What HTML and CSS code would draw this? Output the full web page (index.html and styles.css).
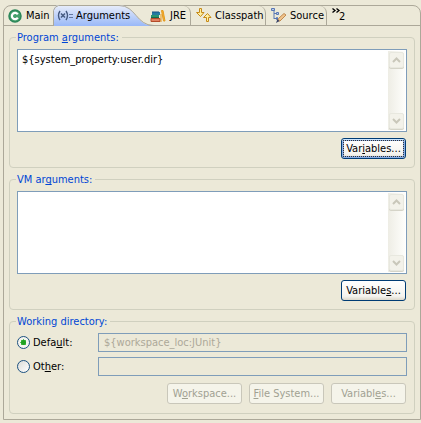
FILE: index.html
```html
<!DOCTYPE html>
<html lang="en">
<head>
<meta charset="utf-8">
<title>Arguments</title>
<link rel="stylesheet" href="styles.css">
</head>
<body>
<main class="panel">
  <nav class="tabs" role="tablist">
    <button class="tab tab-main" role="tab" type="button">
      <svg width="14" height="14" viewBox="0 0 14 14"><circle cx="7" cy="7" r="6" fill="#45a06c" stroke="#2a8659" stroke-width="1.500"/><path d="M9.800 5.300A3.200 3.200 0 1 0 9.800 8.700" fill="none" stroke="#fff" stroke-width="2.200"/></svg>
      <span>Main</span>
    </button>
    <button class="tab tab-selected" role="tab" type="button" aria-selected="true">
      <svg class="tab-shape" width="101" height="21" viewBox="0 0 101 21">
        <defs><linearGradient id="blue" x1="0" y1="0" x2="0" y2="1"><stop offset="0" stop-color="#e9eefa"/><stop offset="1" stop-color="#99b8f8"/></linearGradient></defs>
        <path d="M0 21V5Q1 1 5 0H66C83 0 83 21 101 21Z" fill="url(#blue)"/>
        <path d="M.5 21V5.500Q1.500 1.500 5.500.5H66C83 .5 83 20.500 101 20.500" fill="none" stroke="#aca899"/>
      </svg>
      <svg width="17" height="12" viewBox="0 0 17 12" fill="none" stroke="#465a80"><path d="M3 1Q0 5.500 3 10M9 1Q12 5.500 9 10" stroke-width="1.400"/><path d="M4 3.500l4 4M8 3.500l-4 4" stroke-width="1.500"/><path d="M12 4.500h4M12 7.500h4" stroke="#64779e"/></svg>
      <span>Arguments</span>
    </button>
    <button class="tab tab-jre" role="tab" type="button">
      <svg width="16" height="14" viewBox="0 0 16 14"><path d="M2 3h8v3H2z" fill="#267aa0"/><path d="M2 3h7" stroke="#174f86"/><path d="M1 6h8v3H1z" fill="#2c9470"/><path d="M1 8.500h8" stroke="#14694e"/><path d="M1 9.500h9v3H1z" fill="#e08060" stroke="#b34b28"/><path d="M11.500 1.500h1.500l2 10.500h-1.500zM11 5v8" fill="#f7b233" stroke="#e59a1c"/></svg>
      <span>JRE</span>
    </button>
    <button class="tab tab-classpath" role="tab" type="button">
      <svg width="16" height="15" viewBox="0 0 16 15" fill="#fff0a0" stroke="#c68a18"><path d="M3.500.5h2v4h2.500l-3.500 4-4-4h3zM10.500 13.500h2v-4h2.500l-3.500-4-4 4h3z"/></svg>
      <span>Classpath</span>
    </button>
    <button class="tab tab-source" role="tab" type="button">
      <svg width="16" height="16" viewBox="0 0 16 16"><path d="M1 1.500h3M3 2v9M3 5.500h3M3 10.500h3" fill="none" stroke="#5877b4"/><path d="M.5.5h3v2h-3zM5.500 4.500h2v2h-2zM5.500 9.500h1v2h-1z" fill="#bacbea" stroke="#5877b4"/><path d="M6.500 13l1-2.500 5.500-5 2 1.500-6 6z" fill="#f0c48c" stroke="#c08a50"/><path d="M5 15l1.500-4 2 2z" fill="#354269"/></svg>
      <span>Source</span>
    </button>
    <button class="more" type="button" aria-label="Show 2 more tabs">
      <svg width="9" height="5" viewBox="0 0 9 5"><path d="M.5.5l2.500 2-2.500 2M4.500.5l2.500 2-2.500 2" fill="none" stroke="#000" stroke-width="1.300"/></svg>
      <span>2</span>
    </button>
  </nav>
  <form class="content">
    <fieldset class="group">
      <legend><label for="program">Program <u>a</u>rguments:</label></legend>
      <div class="editor">
        <textarea id="program" spellcheck="false">${system_property:user.dir}</textarea>
        <div class="scrollbar">
          <button class="arrow" type="button" disabled aria-label="Scroll up"><svg width="9" height="6" viewBox="0 0 9 6"><path d="M1 5l3.500-3.500L8 5"/></svg></button>
          <button class="arrow" type="button" disabled aria-label="Scroll down"><svg width="9" height="6" viewBox="0 0 9 6"><path d="M1 1l3.500 3.500L8 1"/></svg></button>
        </div>
      </div>
      <div class="actions"><button class="btn btn-focus" type="button">Var<u>i</u>ables...</button></div>
    </fieldset>
    <fieldset class="group">
      <legend><label for="vm">VM ar<u>g</u>uments:</label></legend>
      <div class="editor">
        <textarea id="vm" spellcheck="false"></textarea>
        <div class="scrollbar">
          <button class="arrow" type="button" disabled aria-label="Scroll up"><svg width="9" height="6" viewBox="0 0 9 6"><path d="M1 5l3.500-3.500L8 5"/></svg></button>
          <button class="arrow" type="button" disabled aria-label="Scroll down"><svg width="9" height="6" viewBox="0 0 9 6"><path d="M1 1l3.500 3.500L8 1"/></svg></button>
        </div>
      </div>
      <div class="actions"><button class="btn" type="button">Variable<u>s</u>...</button></div>
    </fieldset>
    <fieldset class="group">
      <legend>Working directory:</legend>
      <div class="choices">
        <label class="choice"><input type="radio" name="dir" checked><span>Defa<u>u</u>lt:</span></label>
        <input class="path" type="text" value="${workspace_loc:JUnit}" aria-label="Default directory" disabled>
        <label class="choice"><input type="radio" name="dir"><span>Ot<u>h</u>er:</span></label>
        <input class="path" type="text" aria-label="Other directory" disabled>
      </div>
      <div class="actions">
        <button class="btn" type="button" disabled>W<u>o</u>rkspace...</button>
        <button class="btn" type="button" disabled><u>F</u>ile System...</button>
        <button class="btn" type="button" disabled>Variabl<u>e</u>s...</button>
      </div>
    </fieldset>
  </form>
</main>
</body>
</html>
```
FILE: styles.css
```css
* { box-sizing: border-box; }
body {
  margin: 0;
  padding: 5px 0 3px 3px;
  background: #ece9d8;
  color: #000;
  font: 11px/13px Tahoma, "DejaVu Sans Condensed", "Liberation Sans", sans-serif;
}
button, input, textarea { font: inherit; color: inherit; margin: 0; }
button { background: none; border: 0; padding: 0; white-space: nowrap; }
svg { display: block; flex: none; }
u { text-underline-offset: 1px; text-decoration-thickness: 1px; text-decoration-skip-ink: none; }

.panel { border: 1px solid #aca899; border-radius: 8px 8px 0 0; }
.tabs { display: flex; height: 20px; border-bottom: 1px solid #aca899; }
.tab {
  display: flex;
  align-items: center;
  gap: 4px;
  position: relative;
  padding-left: 5px;
  border-right: 1px solid #aca899;
  border-radius: 0 7px 0 0;
}
.tab > span { position: relative; }
.tab > svg { position: relative; }
.tab-main { width: 49px; padding-left: 4px; border: 0; }
.tab-selected { width: 96px; padding-left: 4px; gap: 2px; border: 0; }
.tab > .tab-shape { position: absolute; left: 0; top: -1px; }
.tab-jre { width: 42px; padding-left: 1px; }
.tab-classpath { width: 75px; gap: 3px; }
.tab-source { width: 61px; gap: 3px; }
.more { display: flex; align-items: flex-start; padding: 2px 0 0 5px; }
.more span { padding-top: 2px; margin-left: -2px; }

.content { display: grid; gap: 5px; padding: 5px; }
.group {
  min-width: 0;
  margin: 0;
  padding: 5px 7px 8px;
  border: 1px solid #d0d0bf;
  border-radius: 4px;
}
legend { padding: 0 3px 0 1px; margin-left: -1px; color: #0046d5; }
.editor {
  display: flex;
  height: 83px;
  padding: 1px;
  border: 1px solid #7f9db9;
  background: #fff;
}
.editor textarea {
  flex: 1;
  min-width: 0;
  padding: 2px 3px;
  border: 0;
  outline: 0;
  resize: none;
  overflow: hidden;
  background: #fff;
}
.scrollbar {
  display: flex;
  flex-direction: column;
  justify-content: space-between;
  width: 17px;
  padding: 1px;
  background: linear-gradient(90deg, #eeede5, #fefefb);
}
.arrow {
  display: grid;
  place-items: center;
  height: 16px;
  border: 1px solid #e8e8df;
  border-radius: 2px;
  background: #f3f2ea;
  box-shadow: 0 1px 0 #d5d4c8;
}
.arrow path { fill: none; stroke: #c9c7ba; stroke-width: 2; }

.actions { display: flex; justify-content: flex-end; gap: 7px; padding: 6px 1px 0 0; }
.btn {
  min-width: 65px;
  height: 21px;
  padding: 0 3px;
  border: 1px solid #003c74;
  border-radius: 3px;
  background: linear-gradient(#fff, #f4f3ee 80%, #dcd8cb);
}
.btn-focus {
  box-shadow: inset 0 1px 0 #cee7ff, inset 0 0 0 2px #89ade4;
  outline: 1px dotted #333;
  outline-offset: -3px;
}
.btn:disabled { min-width: 75px; border-color: #c9c7ba; background: #f5f4ea; color: #a1a192; }

.choices {
  display: grid;
  grid-template-columns: 77px 1fr;
  gap: 5px 4px;
  align-items: center;
  padding-bottom: 1px;
}
.choices + .actions { padding-bottom: 1px; }
.choice { display: flex; align-items: center; gap: 3px; }
.choice input {
  appearance: none;
  width: 13px;
  height: 13px;
  border: 1px solid #1c5180;
  border-radius: 50%;
  background: linear-gradient(135deg, #dcdcd7, #fff);
}
.choice input:checked { background: radial-gradient(circle, #21a121 0 2px, #55c555 3px, #f4f4f0 3px); }
.path {
  width: 100%;
  min-width: 0;
  height: 19px;
  padding: 0 5px;
  border: 1px solid #7f9db9;
  background: #ece9d8;
  color: #aca899;
}
```
